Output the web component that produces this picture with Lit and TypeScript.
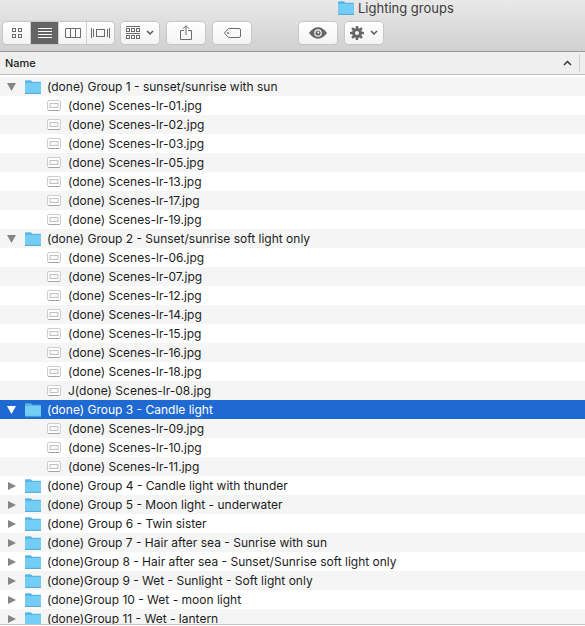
import { LitElement, html, svg, css } from "lit";
import { customElement, property, state } from "lit/decorators.js";
import { classMap } from "lit/directives/class-map.js";

interface Group {
  name: string;
  open: boolean;
  files: string[];
}

const scenes = (...ids: string[]) => ids.map((id) => `(done) Scenes-lr-${id}.jpg`);

const GROUPS: Group[] = [
  { name: "(done) Group 1 - sunset/sunrise with sun", open: true, files: scenes("01", "02", "03", "05", "13", "17", "19") },
  {
    name: "(done) Group 2 - Sunset/sunrise soft light only",
    open: true,
    files: [...scenes("06", "07", "12", "14", "15", "16", "18"), "J(done) Scenes-lr-08.jpg"],
  },
  { name: "(done) Group 3 - Candle light", open: true, files: scenes("09", "10", "11") },
  { name: "(done) Group 4 - Candle light with thunder", open: false, files: [] },
  { name: "(done) Group 5 - Moon light - underwater", open: false, files: [] },
  { name: "(done) Group 6 - Twin sister", open: false, files: [] },
  { name: "(done) Group 7 - Hair after sea - Sunrise with sun", open: false, files: [] },
  { name: "(done)Group 8 - Hair after sea - Sunset/Sunrise soft light only", open: false, files: [] },
  { name: "(done)Group 9 - Wet - Sunlight - Soft light only", open: false, files: [] },
  { name: "(done)Group 10 - Wet - moon light", open: false, files: [] },
  { name: "(done)Group 11 - Wet - lantern", open: false, files: [] },
];

const folderIcon = html`<svg width="16" height="14" viewBox="0 0 16 14" aria-hidden="true">
  <path d="M0 1.2Q0 .2 1 .2H5.4Q6.2 .2 6.6 .9L7.2 1.7H15.2Q16 1.7 16 2.5V13H0Z" fill="#58b6e2" />
  <path d="M0 3H16V13H0Z" fill="#74cdf4" />
  <path d="M0 13.4H16" stroke="#4ea3cb" />
</svg>`;

const fileIcon = html`<svg width="14" height="11" viewBox="0 0 14 11" aria-hidden="true">
  <rect x=".5" y=".5" width="13" height="10" rx="1.5" fill="#fff" stroke="#cdcdcd" />
  <path d="M1.5 10.5H12.5" stroke="#a2a2a2" />
  <rect x="3" y="3.5" width="8" height="4" fill="#fafafa" stroke="#c2c2c2" />
</svg>`;

const chevron = svg`<path d="M0 0L3 3L6 0" fill="none" stroke="#555" stroke-width="1.5" />`;

const gridIcon = html`<svg width="12" height="12" viewBox="0 0 12 12" aria-hidden="true">
  <g fill="none" stroke="#6b6b6b">
    <rect x="1.5" y="1.5" width="3" height="3" /><rect x="7.5" y="1.5" width="3" height="3" />
    <rect x="1.5" y="7.5" width="3" height="3" /><rect x="7.5" y="7.5" width="3" height="3" />
  </g>
</svg>`;

const listIcon = html`<svg width="14" height="10" viewBox="0 0 14 10" aria-hidden="true">
  <path d="M0 .5H14M0 3.5H14M0 6.5H14M0 9.5H14" stroke="#fff" />
</svg>`;

const columnsIcon = html`<svg width="16" height="10" viewBox="0 0 16 10" aria-hidden="true">
  <path d="M.5 .5H15.5V9.5H.5ZM5.5 .5V9.5M10.5 .5V9.5" fill="none" stroke="#6b6b6b" />
</svg>`;

const coverIcon = html`<svg width="19" height="10" viewBox="0 0 19 10" aria-hidden="true">
  <path d="M.5 0V10M2.5 1V9M16.5 1V9M18.5 0V10" stroke="#6b6b6b" />
  <rect x="5.5" y="1.5" width="8" height="7" fill="none" stroke="#6b6b6b" />
</svg>`;

const arrangeIcon = html`<svg width="28" height="14" viewBox="0 0 28 14" aria-hidden="true">
  <g fill="none" stroke="#6b6b6b">
    <path d="M0 .5H14M0 7.5H14" />
    <rect x=".5" y="2.5" width="3" height="3" /><rect x="5.5" y="2.5" width="3" height="3" /><rect x="10.5" y="2.5" width="3" height="3" />
    <rect x=".5" y="9.5" width="3" height="3" /><rect x="5.5" y="9.5" width="3" height="3" /><rect x="10.5" y="9.5" width="3" height="3" />
  </g>
  <g transform="translate(21 5)">${chevron}</g>
</svg>`;

const shareIcon = html`<svg width="12" height="16" viewBox="0 0 12 16" aria-hidden="true">
  <path d="M4 5.5H.5V14.5H11.5V5.5H8M6 10V1M3 3.7L6 .7L9 3.7" fill="none" stroke="#6b6b6b" />
</svg>`;

const tagIcon = html`<svg width="17" height="10" viewBox="0 0 17 10" aria-hidden="true">
  <path d="M5.2 .5H15Q16.5 .5 16.5 2V8Q16.5 9.5 15 9.5H5.2Q4.4 9.5 3.8 8.9L.5 5L3.8 1.1Q4.4 .5 5.2 .5Z" fill="none" stroke="#6b6b6b" />
  <circle cx="4" cy="5" r=".9" fill="#6b6b6b" />
</svg>`;

const eyeIcon = html`<svg width="18" height="12" viewBox="0 0 18 12" aria-hidden="true">
  <path d="M0 6Q4 .3 9 .3T18 6Q14 11.7 9 11.7T0 6Z" fill="#666" />
  <circle cx="9" cy="6" r="3.8" fill="#f7f7f7" />
  <circle cx="9" cy="6" r="2.6" fill="#666" />
  <circle cx="9.3" cy="5.6" r="1" fill="#f7f7f7" />
</svg>`;

const teeth = [0, 45, 90, 135, 180, 225, 270, 315];

const gearIcon = html`<svg width="28" height="14" viewBox="0 0 28 14" aria-hidden="true">
  <g fill="#666">
    ${teeth.map((a) => svg`<path d="M5.5 3L5.9 0H8.1L8.5 3Z" transform="rotate(${a} 7 7)" />`)}
  </g>
  <circle cx="7" cy="7" r="3.4" fill="none" stroke="#666" stroke-width="2.8" />
  <g transform="translate(21 5)">${chevron}</g>
</svg>`;

@customElement("tool-button")
class ToolButton extends LitElement {
  @property() label = "";
  @property({ type: Boolean, reflect: true }) pressed = false;

  static styles = css`
    :host {
      display: block;
      width: 38px;
      height: 22px;
      box-sizing: border-box;
      background: linear-gradient(#fff, #f3f3f3);
      border-radius: 4px;
      box-shadow: 0 0 1px 1px #c6c6c6;
      overflow: hidden;
    }
    :host([segment]) {
      width: 27px;
      border-radius: 0;
      box-shadow: none;
    }
    :host([pressed]) {
      background: #656565;
    }
    .button {
      display: flex;
      align-items: center;
      justify-content: center;
      width: 100%;
      height: 100%;
      padding: 0;
      border: 0;
      background: none;
    }
  `;

  render() {
    return html`<button class="button" aria-label=${this.label} aria-pressed=${this.pressed}><slot></slot></button>`;
  }
}

@customElement("app-root")
class AppRoot extends LitElement {
  @state() groups = GROUPS;
  @state() selected = 2;

  static styles = css`
    :host {
      display: flex;
      flex-direction: column;
      height: 100vh;
      box-sizing: border-box;
      padding-bottom: 1px;
      background: #fff;
      color: #1c1c1c;
      font: 12px/19px Inter, "Liberation Sans", sans-serif;
    }
    svg {
      display: block;
      flex: none;
    }
    .chrome {
      flex: none;
      background: linear-gradient(#e9e9e9, #d0d0d0);
      border-bottom: 1px solid #999;
    }
    .title {
      display: flex;
      align-items: center;
      gap: 4px;
      height: 16px;
      margin: 0;
      padding-left: 338px;
      font-size: 13px;
      font-weight: 400;
      color: #3c3c3c;
      white-space: nowrap;
    }
    .toolbar {
      display: flex;
      gap: 8px;
      padding: 6px 3px 7px;
    }
    .segments {
      display: flex;
      gap: 1px;
      margin-right: -1px;
      background: #d0d0d0;
      border-radius: 4px;
      box-shadow: 0 0 1px 1px #c6c6c6;
      overflow: hidden;
    }
    .actions {
      display: flex;
      gap: 8px;
      margin-left: 40px;
    }
    .listing {
      flex: 1;
      min-height: 0;
      overflow: hidden;
      border-bottom: 1px solid #c4c4c4;
    }
    .table {
      width: 100%;
      border-collapse: separate;
      border-spacing: 0;
      table-layout: fixed;
    }
    .head {
      height: 22px;
      box-sizing: content-box;
      padding: 0;
      background: #efefef;
      border-bottom: 1px solid #bdbdbd;
      text-align: left;
      font-size: 11px;
      font-weight: 500;
    }
    .narrow {
      width: 5px;
    }
    .sort {
      display: flex;
      align-items: center;
      justify-content: space-between;
      width: 100%;
      height: 18px;
      padding: 0 7px 0 5px;
      border: 0;
      border-right: 1px solid #cfcfcf;
      background: none;
      color: inherit;
      font: inherit;
    }
    .spacer {
      height: 2px;
      padding: 0;
    }
    .cell {
      padding: 0;
    }
    .row:nth-child(odd) {
      background: #f5f5f5;
    }
    .row.selected {
      background: #1f69d2;
      color: #fff;
    }
    .entry {
      display: flex;
      align-items: center;
      height: 19px;
      padding-left: 6px;
      white-space: nowrap;
    }
    .entry.file {
      gap: 7px;
      padding-left: 47px;
    }
    .toggle {
      display: flex;
      align-items: center;
      justify-content: center;
      width: 11px;
      height: 19px;
      margin-right: 8px;
      padding: 0;
      border: 0;
      background: none;
      color: #858585;
    }
    .selected .toggle {
      color: #fff;
    }
    .label {
      margin-left: 6px;
    }
  `;

  toggle(index: number) {
    this.groups = this.groups.map((g, i) => (i === index ? { ...g, open: !g.open } : g));
  }

  renderGroup(group: Group, index: number) {
    return html`
      <tr class=${classMap({ row: true, selected: index === this.selected })} @click=${() => (this.selected = index)}>
        <td class="cell" colspan="2">
          <div class="entry">
            <button class="toggle" aria-label="Toggle ${group.name}" aria-expanded=${group.open} @click=${() => this.toggle(index)}>
              <svg width="9" height="8" viewBox="0 0 9 8" aria-hidden="true">
                <path d=${group.open ? "M0 0H9L4.5 8Z" : "M1 0L9 4L1 8Z"} fill="currentColor" />
              </svg>
            </button>
            ${folderIcon}<span class="label">${group.name}</span>
          </div>
        </td>
      </tr>
      ${group.open
        ? group.files.map(
            (file) => html`<tr class="row"><td class="cell" colspan="2"><div class="entry file">${fileIcon}<span>${file}</span></div></td></tr>`
          )
        : null}
    `;
  }

  render() {
    return html`
      <header class="chrome">
        <h1 class="title">${folderIcon}<span>Lighting groups</span></h1>
        <div class="toolbar">
          <div class="segments" role="group" aria-label="View">
            <tool-button segment label="Icons">${gridIcon}</tool-button>
            <tool-button segment pressed label="List">${listIcon}</tool-button>
            <tool-button segment label="Columns">${columnsIcon}</tool-button>
            <tool-button segment label="Cover Flow">${coverIcon}</tool-button>
          </div>
          <tool-button label="Arrange">${arrangeIcon}</tool-button>
          <tool-button label="Share">${shareIcon}</tool-button>
          <tool-button label="Tags">${tagIcon}</tool-button>
          <div class="actions">
            <tool-button label="Quick Look">${eyeIcon}</tool-button>
            <tool-button label="Action">${gearIcon}</tool-button>
          </div>
        </div>
      </header>
      <main class="listing">
        <table class="table">
          <colgroup><col /><col class="narrow" /></colgroup>
          <thead>
            <tr>
              <th class="head" aria-sort="ascending">
                <button class="sort">
                  Name
                  <svg width="9" height="6" viewBox="0 0 9 6" aria-hidden="true">
                    <path d="M1 5L4.5 1.5L8 5" fill="none" stroke="#333" stroke-width="1.5" />
                  </svg>
                </button>
              </th>
              <th class="head"></th>
            </tr>
            <tr><td class="spacer" colspan="2"></td></tr>
          </thead>
          <tbody>${this.groups.map((g, i) => this.renderGroup(g, i))}</tbody>
        </table>
      </main>
    `;
  }
}
